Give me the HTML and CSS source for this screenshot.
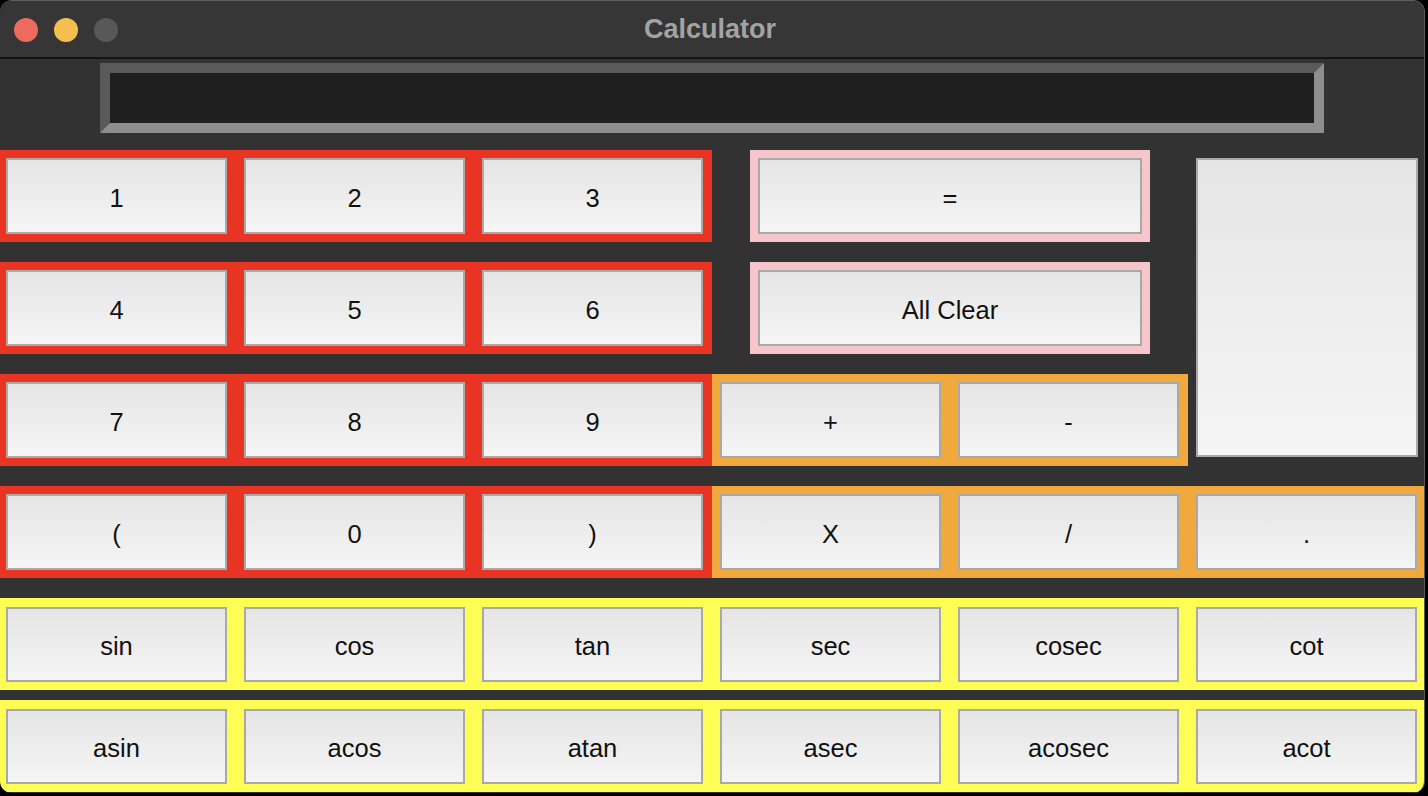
FILE: index.html
```html
<!DOCTYPE html>
<html>
<head>
<meta charset="utf-8">
<title>Calculator</title>
<link rel="stylesheet" href="styles.css">
</head>
<body>
<div class="window">
  <div class="titlebar">
    <div class="lights">
      <span class="light red"></span>
      <span class="light yellow"></span>
      <span class="light grey"></span>
    </div>
    <div class="title">Calculator</div>
  </div>
  <div class="content">
    <div class="entry"></div>
    <div class="keypad">
      <div class="frame red-f r1"><div class="btn">1</div><div class="btn">2</div><div class="btn">3</div></div>
      <div class="frame red-f r2"><div class="btn">4</div><div class="btn">5</div><div class="btn">6</div></div>
      <div class="frame red-f r3"><div class="btn">7</div><div class="btn">8</div><div class="btn">9</div></div>
      <div class="frame red-f r4"><div class="btn">(</div><div class="btn">0</div><div class="btn">)</div></div>
      <div class="pink-f r1"><div class="btn wide">=</div></div>
      <div class="pink-f r2"><div class="btn wide">All Clear</div></div>
      <div class="frame orange-f r3 ops2"><div class="btn">+</div><div class="btn">-</div></div>
      <div class="frame orange-f r4 ops3"><div class="btn">X</div><div class="btn">/</div><div class="btn">.</div></div>
      <div class="bigcell"><div class="btn big"></div></div>
    </div>
    <div class="trig">
      <div class="frame yellow-f"><div class="btn">sin</div><div class="btn">cos</div><div class="btn">tan</div><div class="btn">sec</div><div class="btn">cosec</div><div class="btn">cot</div></div>
      <div class="frame yellow-f"><div class="btn">asin</div><div class="btn">acos</div><div class="btn">atan</div><div class="btn">asec</div><div class="btn">acosec</div><div class="btn">acot</div></div>
    </div>
  </div>
</div>
</body>
</html>
```

FILE: styles.css
```css
html, body {
  margin: 0;
  padding: 0;
  background: #000;
}
body {
  width: 1428px;
  height: 796px;
  overflow: hidden;
  font-family: "Liberation Sans", Arial, sans-serif;
}
.window {
  width: 1425px;
  height: 793px;
  background: #323232;
  border-radius: 12px;
  border-top: 1px solid #5e5e5e;
  border-right: 1px solid #5a5a5a;
  overflow: hidden;
  box-sizing: border-box;
}
.titlebar {
  position: relative;
  height: 56px;
  background: #363636;
  border-bottom: 2px solid #141414;
  display: flex;
  align-items: center;
  justify-content: center;
}
.lights {
  position: absolute;
  left: 14px;
  top: 17px;
  display: flex;
  gap: 16px;
}
.light {
  width: 24px;
  height: 24px;
  border-radius: 50%;
  display: block;
}
.light.red { background: #ed6a5e; }
.light.yellow { background: #f5bf4f; }
.light.grey { background: #585858; }
.title {
  font-size: 27px;
  font-weight: bold;
  color: #a3a3a3;
  margin-left: -4px;
  margin-top: 1px;
}
.content {
  padding-top: 4px;
}
.entry {
  margin-left: 100px;
  width: 1224px;
  height: 70px;
  box-sizing: border-box;
  background: #1f1f1f;
  border-width: 10px;
  border-style: solid;
  border-color: #5a5a5a #8e8e8e #8e8e8e #5a5a5a;
}
.keypad {
  margin-top: 17px;
  margin-left: -2px;
  display: grid;
  grid-template-columns: repeat(6, 238px);
  grid-template-rows: repeat(4, 92px);
  row-gap: 20px;
}
.frame {
  display: flex;
  gap: 17px;
  padding: 8px 0 0 8px;
  box-sizing: border-box;
}
.red-f { background: #e93424; grid-column: 1 / 4; }
.orange-f { background: #f1a83d; }
.yellow-f { background: #fefd56; height: 92px; padding-top: 9px; }
.r1 { grid-row: 1; }
.r2 { grid-row: 2; }
.r3 { grid-row: 3; }
.r4 { grid-row: 4; }
.ops2 { grid-column: 4 / 6; }
.ops3 { grid-column: 4 / 7; }
.pink-f {
  grid-column: 4 / 6;
  justify-self: center;
  width: 400px;
  padding: 8px;
  box-sizing: border-box;
  background: #f7c6cd;
}
.bigcell {
  grid-column: 6;
  grid-row: 1 / 4;
  padding: 8px 8px 9px 8px;
  box-sizing: border-box;
  display: flex;
}
.btn {
  width: 221px;
  height: 76px;
  box-sizing: border-box;
  border: 2px solid #a9a9a9;
  background: linear-gradient(#e5e5e5, #f5f5f5);
  display: flex;
  align-items: center;
  justify-content: center;
  font-size: 25.5px;
  color: #111;
  flex: none;
  padding-top: 4px;
}
.btn.wide {
  width: 100%;
  height: 100%;
}
.btn.big {
  width: 222px;
  height: 100%;
}
.trig {
  margin-top: 20px;
  margin-left: -2px;
  width: 1430px;
  display: flex;
  flex-direction: column;
  gap: 10px;
}
.trig .btn {
  height: 75px;
}
```
